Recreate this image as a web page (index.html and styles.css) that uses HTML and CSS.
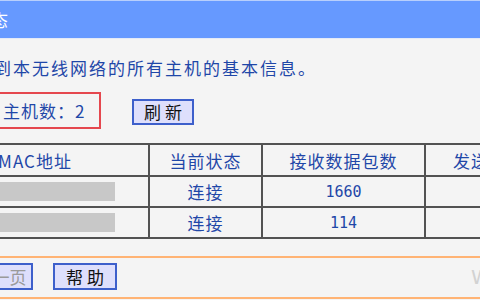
FILE: index.html
```html
<!DOCTYPE html>
<html lang="zh-CN">
<head>
    <meta charset="UTF-8">
    <title>无线网络主机状态</title>
    <link rel="stylesheet" href="styles.css">
</head>
<body>

    <div class="page">
        <div class="head">
            <span class="title">无线网络主机状态</span>
        </div>

        <p class="desc">本页显示连接到本无线网络的所有主机的基本信息。</p>

        <div class="count-row">
            <div class="count">主机数：2</div>
            <button class="btn refresh">刷 新</button>
        </div>

        <!-- 主机列表 -->
        <div class="host-table">
            <div class="cell">MAC地址</div>
            <div class="cell">当前状态</div>
            <div class="cell">接收数据包数</div>
            <div class="cell">发送数据包数</div>

            <div class="cell"><span class="mask"></span></div>
            <div class="cell">连接</div>
            <div class="cell num">1660</div>
            <div class="cell num">1820</div>

            <div class="cell"><span class="mask"></span></div>
            <div class="cell">连接</div>
            <div class="cell num">114</div>
            <div class="cell num">96</div>
        </div>

        <div class="foot">
            <button class="btn prev" disabled>上一页</button>
            <button class="btn help">帮 助</button>
            <span class="mark">W</span>
        </div>
    </div>

</body>
</html>
```

FILE: styles.css
```css
html, body {
    margin: 0;
    padding: 0;
}

body {
    width: 480px;
    height: 300px;
    overflow: hidden;
    background-color: #f4f4f4;
    font-family: "Noto Sans CJK SC", sans-serif;
    color: #1f47a8;
}

.page {
    margin-left: -160px;
    width: 800px;
}

.head {
    height: 37px;
    background-color: #6699ff;
    border-top: 1px solid #b8cffc;
    border-bottom: 1px solid #e4eaf7;
    display: flex;
    align-items: center;
}

.title {
    width: 169px;
    text-align: right;
    color: #fff;
    font-size: 17px;
    letter-spacing: 1px;
}

.desc {
    margin: 17px 0 0;
    padding-left: 40px;
    font-size: 17px;
    line-height: 24px;
    letter-spacing: 2px;
}

.count-row {
    display: flex;
    align-items: center;
    margin-top: 12px;
    padding-left: 148px;
}

.count {
    box-sizing: border-box;
    width: 113px;
    height: 37px;
    padding-left: 13px;
    border: 2px solid #e5474e;
    display: flex;
    align-items: center;
    font-size: 17px;
    letter-spacing: 1px;
}

.btn {
    box-sizing: border-box;
    height: 26px;
    width: 62px;
    padding: 0;
    background-color: #dedffc;
    border: 2px solid #3d5fcb;
    color: #111;
    font-family: "Noto Sans CJK SC", sans-serif;
    font-size: 17px;
    line-height: 20px;
}

.refresh {
    margin-left: 31px;
    margin-top: 3px;
}

.host-table {
    display: grid;
    grid-template-columns: 226px 111px 161px 162px;
    grid-template-rows: 30px 29px 29px;
    gap: 2px;
    padding: 2px;
    width: max-content;
    margin: 14px 0 0 80px;
    background-color: #525252;
}

.cell {
    background-color: #f4f4f4;
    display: flex;
    align-items: center;
    justify-content: center;
    font-size: 17px;
    letter-spacing: 1px;
}

.num {
    font-family: "DejaVu Sans Mono", monospace;
    font-size: 15px;
    letter-spacing: 0;
}

.mask {
    width: 160px;
    height: 19px;
    background-color: #c8c8c8;
}

.foot {
    display: flex;
    align-items: center;
    margin-top: 17px;
    padding: 5px 0 7px 129px;
    border-top: 2px solid #ffb374;
    border-bottom: 2px solid #ffb374;
}

.foot .btn {
    height: 27px;
    width: 64px;
}

.prev {
    color: #9a9a9a;
}

.help {
    margin-left: 20px;
}

.mark {
    margin-left: 354px;
    color: #d2d2d2;
    font-family: "DejaVu Sans", sans-serif;
    font-size: 20px;
}
```
